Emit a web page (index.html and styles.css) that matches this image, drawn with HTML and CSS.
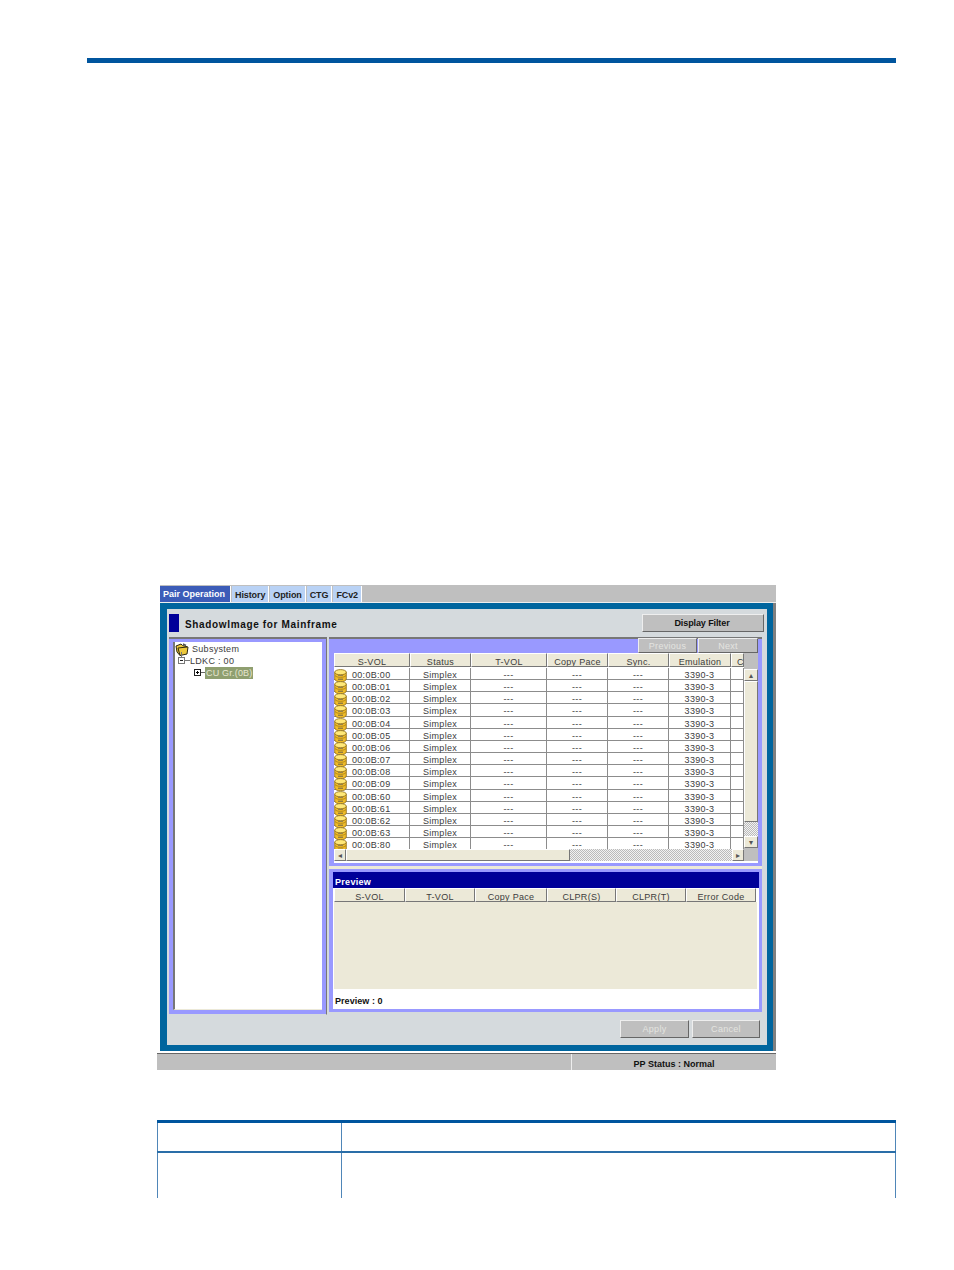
FILE: index.html
```html
<!DOCTYPE html>
<html lang="en">
<head>
  <meta charset="UTF-8" />
  <title>ShadowImage for Mainframe</title>
  <link rel="stylesheet" href="styles.css">
</head>
<body>
  <svg class="defs" width="0" height="0">
    <symbol id="disk" viewBox="0 0 13 13">
      <path d="M.7 3.200v6.800c0 1.600 2.600 2.800 5.800 2.800s5.800-1.200 5.800-2.800V3.200z" fill="#f0bc28" stroke="#8a6a18" stroke-width=".8"/>
      <ellipse cx="6.500" cy="3.200" rx="5.800" ry="2.600" fill="#ffe878" stroke="#8a6a18" stroke-width=".8"/>
      <path d="M1 6.600c1.500 1.500 3.500 1.700 5.500 1.700s4-.2 5.500-1.700" fill="none" stroke="#a07a18" stroke-width=".8"/>
      <path d="M4 10.200h5" stroke="#5a564e" stroke-width=".9"/>
      <path d="M4 6.400h5" stroke="#6a665e" stroke-width=".7"/>
    </symbol>
  </svg>

  <div class="top-rule"></div>

  <div class="shot">
    <div class="shot-main">
      <div class="tabs">
        <div class="tab active">Pair Operation</div>
        <div class="tab">History</div>
        <div class="tab">Option</div>
        <div class="tab">CTG</div>
        <div class="tab">FCv2</div>
      </div>

      <div class="frame">
        <div class="title-row">
          <div class="title-mark"></div>
          <div class="title">ShadowImage for Mainframe</div>
          <div class="btn filter-btn">Display Filter</div>
        </div>

        <div class="panes">
          <div class="tree-pane">
            <div class="tree">
              <div class="tree-row">
                <svg class="tree-folder" width="14" height="13" viewBox="0 0 14 13">
                  <path d="M1 3l5-2 1.500 1.500L13 4l-1 7-7 1.500L2 9z" fill="#ecc83c" stroke="#2e2810"/>
                  <path d="M5 12.500L3 5l9-1" fill="none" stroke="#2e2810"/>
                  <path d="M8 1l3 1.500" stroke="#555" stroke-width="1.500"/>
                </svg>
                <span>Subsystem</span>
              </div>
              <div class="tree-row lvl-1">
                <svg class="twisty" width="12" height="12" viewBox="0 0 12 12">
                  <path d="M3.500 -3V2M7 5.500h5" stroke="#777" fill="none"/>
                  <rect x=".5" y="2.500" width="6" height="6" fill="#fff" stroke="#777"/>
                  <path d="M2 5.500h3" stroke="#222"/>
                </svg>
                <span>LDKC : 00</span>
              </div>
              <div class="tree-row lvl-2">
                <svg class="twisty" width="11" height="12" viewBox="0 0 11 12">
                  <path d="M7 5.500h4" stroke="#666" fill="none"/>
                  <rect x=".5" y="2.500" width="6" height="6" fill="#fff" stroke="#222"/>
                  <path d="M2 5.500h3M3.500 4v3" stroke="#000"/>
                </svg>
                <span class="tree-selected">CU Gr.(0B)</span>
              </div>
            </div>
          </div>

          <div class="right-col">
            <div class="list-pane">
              <div class="pager">
                <div class="btn disabled pager-btn">Previous</div>
                <div class="btn disabled pager-btn next">Next</div>
              </div>
              <div class="list-view">
                <div class="list-main">
                  <div class="list-head">
                    <div class="head-cell">S-VOL</div>
                    <div class="head-cell">Status</div>
                    <div class="head-cell">T-VOL</div>
                    <div class="head-cell">Copy Pace</div>
                    <div class="head-cell">Sync.</div>
                    <div class="head-cell">Emulation</div>
                    <div class="head-cell clipped">C</div>
                  </div>
                  <div class="list-body">
                    <div class="list-row"><div class="cell vol"><svg class="disk"><use href="#disk"/></svg>00:0B:00</div><div class="cell">Simplex</div><div class="cell">---</div><div class="cell">---</div><div class="cell">---</div><div class="cell">3390-3</div><div class="cell"></div></div>
                    <div class="list-row"><div class="cell vol"><svg class="disk"><use href="#disk"/></svg>00:0B:01</div><div class="cell">Simplex</div><div class="cell">---</div><div class="cell">---</div><div class="cell">---</div><div class="cell">3390-3</div><div class="cell"></div></div>
                    <div class="list-row"><div class="cell vol"><svg class="disk"><use href="#disk"/></svg>00:0B:02</div><div class="cell">Simplex</div><div class="cell">---</div><div class="cell">---</div><div class="cell">---</div><div class="cell">3390-3</div><div class="cell"></div></div>
                    <div class="list-row"><div class="cell vol"><svg class="disk"><use href="#disk"/></svg>00:0B:03</div><div class="cell">Simplex</div><div class="cell">---</div><div class="cell">---</div><div class="cell">---</div><div class="cell">3390-3</div><div class="cell"></div></div>
                    <div class="list-row"><div class="cell vol"><svg class="disk"><use href="#disk"/></svg>00:0B:04</div><div class="cell">Simplex</div><div class="cell">---</div><div class="cell">---</div><div class="cell">---</div><div class="cell">3390-3</div><div class="cell"></div></div>
                    <div class="list-row"><div class="cell vol"><svg class="disk"><use href="#disk"/></svg>00:0B:05</div><div class="cell">Simplex</div><div class="cell">---</div><div class="cell">---</div><div class="cell">---</div><div class="cell">3390-3</div><div class="cell"></div></div>
                    <div class="list-row"><div class="cell vol"><svg class="disk"><use href="#disk"/></svg>00:0B:06</div><div class="cell">Simplex</div><div class="cell">---</div><div class="cell">---</div><div class="cell">---</div><div class="cell">3390-3</div><div class="cell"></div></div>
                    <div class="list-row"><div class="cell vol"><svg class="disk"><use href="#disk"/></svg>00:0B:07</div><div class="cell">Simplex</div><div class="cell">---</div><div class="cell">---</div><div class="cell">---</div><div class="cell">3390-3</div><div class="cell"></div></div>
                    <div class="list-row"><div class="cell vol"><svg class="disk"><use href="#disk"/></svg>00:0B:08</div><div class="cell">Simplex</div><div class="cell">---</div><div class="cell">---</div><div class="cell">---</div><div class="cell">3390-3</div><div class="cell"></div></div>
                    <div class="list-row"><div class="cell vol"><svg class="disk"><use href="#disk"/></svg>00:0B:09</div><div class="cell">Simplex</div><div class="cell">---</div><div class="cell">---</div><div class="cell">---</div><div class="cell">3390-3</div><div class="cell"></div></div>
                    <div class="list-row"><div class="cell vol"><svg class="disk"><use href="#disk"/></svg>00:0B:60</div><div class="cell">Simplex</div><div class="cell">---</div><div class="cell">---</div><div class="cell">---</div><div class="cell">3390-3</div><div class="cell"></div></div>
                    <div class="list-row"><div class="cell vol"><svg class="disk"><use href="#disk"/></svg>00:0B:61</div><div class="cell">Simplex</div><div class="cell">---</div><div class="cell">---</div><div class="cell">---</div><div class="cell">3390-3</div><div class="cell"></div></div>
                    <div class="list-row"><div class="cell vol"><svg class="disk"><use href="#disk"/></svg>00:0B:62</div><div class="cell">Simplex</div><div class="cell">---</div><div class="cell">---</div><div class="cell">---</div><div class="cell">3390-3</div><div class="cell"></div></div>
                    <div class="list-row"><div class="cell vol"><svg class="disk"><use href="#disk"/></svg>00:0B:63</div><div class="cell">Simplex</div><div class="cell">---</div><div class="cell">---</div><div class="cell">---</div><div class="cell">3390-3</div><div class="cell"></div></div>
                    <div class="list-row"><div class="cell vol"><svg class="disk"><use href="#disk"/></svg>00:0B:80</div><div class="cell">Simplex</div><div class="cell">---</div><div class="cell">---</div><div class="cell">---</div><div class="cell">3390-3</div><div class="cell"></div></div>
                  </div>
                  <div class="hscroll">
                    <div class="sb-btn h">&#9666;</div>
                    <div class="sb-thumb h"></div>
                    <div class="sb-track"></div>
                    <div class="sb-btn h">&#9656;</div>
                  </div>
                </div>
                <div class="vscroll">
                  <div class="sb-corner"></div>
                  <div class="sb-btn v">&#9652;</div>
                  <div class="sb-thumb v"></div>
                  <div class="sb-track"></div>
                  <div class="sb-btn v">&#9662;</div>
                  <div class="sb-corner end"></div>
                </div>
              </div>
            </div>

            <div class="split"></div>

            <div class="preview">
              <div class="preview-bar">Preview</div>
              <div class="preview-head">
                <div class="head-cell">S-VOL</div>
                <div class="head-cell">T-VOL</div>
                <div class="head-cell">Copy Pace</div>
                <div class="head-cell">CLPR(S)</div>
                <div class="head-cell">CLPR(T)</div>
                <div class="head-cell">Error Code</div>
              </div>
              <div class="preview-body"></div>
              <div class="preview-foot">Preview : 0</div>
            </div>
          </div>
        </div>

        <div class="actions">
          <div class="btn disabled apply-btn">Apply</div>
          <div class="btn disabled cancel-btn">Cancel</div>
        </div>
      </div>
    </div>

    <div class="status-bar">
      <div class="status-left"></div>
      <div class="status-right">PP Status : Normal</div>
    </div>
  </div>

  <table class="doc-table">
    <tr class="doc-head"><td class="col-a"></td><td></td></tr>
    <tr class="doc-row"><td class="col-a"></td><td></td></tr>
  </table>
</body>
</html>
```

FILE: styles.css
```css
body {
  margin: 0;
  min-height: 1270px;
  background-color: #fff;
  font-family: "Liberation Sans", Arial, sans-serif;
  color: #3c3c3c;
}
.defs {
  display: block;
  height: 0;
}
.top-rule {
  height: 5px;
  margin: 58px 58px 0 87px;
  background-color: #00559e;
}

/* the screenshot */
.shot {
  width: 619px;
  margin: 522px 0 0 157px;
  font-size: 9px;
  letter-spacing: .3px;
}
.shot-main {
  margin-left: 3px;
  padding-right: 3px;
  background-color: #808080;
}
.tabs {
  display: flex;
  gap: 1px;
  box-sizing: border-box;
  height: 18px;
  margin-right: -3px;
  padding-top: 1px;
  background-color: #bfbfbf;
  border-bottom: 1px solid #eee;
}
.tab {
  padding: 4px 3px 0;
  background-color: #b9d2f5;
  color: #222;
  font-weight: bold;
  letter-spacing: -.1px;
  border-right: 1px solid #fff;
}
.tab.active {
  width: 71px;
  box-sizing: border-box;
  padding-top: 3px;
  background-color: #3c5cb8;
  color: #fff;
  letter-spacing: 0;
  white-space: nowrap;
}
.frame {
  box-sizing: border-box;
  width: 613px;
  height: 448px;
  background-color: #d5dadd;
  border: solid #00659e;
  border-width: 6px 6px 6px 7px;
  display: flex;
  flex-direction: column;
}
.title-row {
  display: flex;
  align-items: flex-start;
  height: 28px;
  padding: 5px 3px 0 2px;
  box-sizing: border-box;
}
.title-mark {
  width: 10px;
  height: 18px;
  background-color: #000099;
}
.title {
  flex: 1;
  margin-left: 6px;
  padding-top: 5px;
  font-size: 10px;
  font-weight: bold;
  letter-spacing: .65px;
  color: #111;
}
.btn {
  box-sizing: border-box;
  display: flex;
  align-items: center;
  justify-content: center;
  background-color: #bfbfbf;
  border: 1px solid;
  border-color: #eee #666 #666 #eee;
  color: #111;
  font-weight: bold;
  letter-spacing: 0;
}
.btn.disabled {
  color: #e4e4e0;
  font-weight: normal;
  letter-spacing: .3px;
}
.filter-btn {
  width: 122px;
  height: 18px;
  padding-right: 2px;
  letter-spacing: -.1px;
}

.panes {
  display: flex;
  height: 378px;
  margin-left: 2px;
}
.tree-pane {
  box-sizing: border-box;
  width: 158px;
  padding: 3px 4px 4px 4px;
  background-color: #9999ff;
  border-top: 2px solid #777;
  border-right: 1px solid #777;
  border-bottom: 1px solid #d5dadd;
}
.tree {
  box-sizing: border-box;
  height: 100%;
  padding-top: 1px;
  background-color: #fff;
  border-left: 2px solid #777;
  border-bottom: 1px solid #ece9d8;
}
.tree-row {
  display: flex;
  align-items: center;
  height: 12px;
  white-space: nowrap;
}
.tree-folder {
  margin-right: 3px;
  flex: none;
  overflow: visible;
}
.twisty {
  flex: none;
  overflow: visible;
}
.lvl-1 {
  padding-left: 3px;
}
.lvl-2 {
  padding-left: 19px;
}
.tree-selected {
  padding: 1px 0 1px 1px;
  background-color: #8f9f70;
  color: #e6e6d0;
  letter-spacing: .2px;
}

.right-col {
  box-sizing: border-box;
  width: 433px;
  margin-left: 2px;
  height: 376px;
  display: flex;
  flex-direction: column;
}
.list-pane {
  box-sizing: border-box;
  height: 229px;
  padding: 0 4px 0 5px;
  background-color: #9999ff;
  border-top: 2px solid #777;
}
.pager {
  display: flex;
  justify-content: flex-end;
  gap: 1px;
  height: 14px;
}
.pager-btn {
  width: 59px;
  height: 15px;
  margin-top: -1px;
}
.next {
  width: 60px;
}
.list-view {
  display: flex;
  height: 208px;
  border-bottom: 2px solid #fff;
  background-color: #bfbfbf;
}
.list-main {
  width: 410px;
  display: flex;
  flex-direction: column;
}
.list-head {
  display: grid;
  grid-template-columns: 76px 61px 76px 61px 61px 62px 13px;
  height: 14px;
  background-color: #bfbfbf;
}
.head-cell {
  box-sizing: border-box;
  display: flex;
  align-items: center;
  justify-content: center;
  padding-top: 3px;
  background-color: #ece9d8;
  border: 1px solid;
  border-color: #fff #777 #777 #fff;
  overflow: hidden;
}
.clipped {
  justify-content: flex-start;
  padding-left: 5px;
}
.list-body {
  flex: 1;
  overflow: hidden;
  background-color: #fff;
  padding-top: .8px;
  min-height: 0;
}
.list-row {
  box-sizing: border-box;
  display: grid;
  grid-template-columns: 76px 61px 76px 61px 61px 62px 13px;
  height: 12.2px;
  border-bottom: 1px solid #8c8c8c;
}
.cell {
  box-sizing: border-box;
  display: flex;
  align-items: center;
  justify-content: center;
  padding-top: 1px;
  line-height: 11px;
  border-right: 1px solid #8c8c8c;
}
.cell.vol {
  justify-content: flex-start;
}
.disk {
  width: 13px;
  height: 13px;
  margin-right: 5px;
  flex: none;
}
.hscroll {
  display: flex;
  height: 12px;
  background-color: #ece9d8;
}
.sb-btn {
  box-sizing: border-box;
  display: flex;
  align-items: center;
  justify-content: center;
  background-color: #ece9d8;
  border: 1px solid;
  border-color: #fff #777 #777 #fff;
  color: #555;
  font-size: 8px;
  letter-spacing: 0;
}
.sb-btn.h {
  width: 12px;
  flex: none;
}
.sb-btn.v {
  height: 12px;
  flex: none;
}
.sb-thumb {
  box-sizing: border-box;
  background-color: #ece9d8;
  border: 1px solid;
  border-color: #fff #777 #777 #fff;
}
.sb-thumb.h {
  width: 224px;
}
.sb-thumb.v {
  height: 141px;
}
.sb-track {
  flex: 1;
  background: repeating-conic-gradient(#bbb 0 25%, #f2f2f2 0 50%) 0 0/2px 2px;
}
.vscroll {
  box-sizing: border-box;
  width: 14px;
  display: flex;
  flex-direction: column;
  background-color: #bfbfbf;
}
.sb-corner {
  height: 16px;
  flex: none;
  background-color: #bfbfbf;
}
.sb-corner.end {
  height: 13px;
}

.split {
  height: 3px;
  background-color: #ece9d8;
}
.preview {
  box-sizing: border-box;
  height: 143px;
  background-color: #fff;
  border: solid #9999ff;
  border-width: 3px 3px 3px 4px;
}
.preview-bar {
  height: 16px;
  line-height: 20px;
  padding-left: 2px;
  background-color: #000099;
  color: #fff;
  font-weight: bold;
  overflow: hidden;
}
.preview-head {
  display: grid;
  grid-template-columns: 71px 70px 72px 69px 70px 70px;
  height: 14px;
  padding-left: 1px;
}
.preview-body {
  height: 87px;
  margin: 0 2px 0 1px;
  background-color: #ece9d8;
}
.preview-foot {
  height: 20px;
  line-height: 24px;
  padding-left: 2px;
  color: #111;
  font-weight: bold;
  letter-spacing: .05px;
  overflow: hidden;
}

.actions {
  display: flex;
  justify-content: flex-end;
  gap: 3px;
  padding: 5px 7px 0 0;
}
.apply-btn {
  width: 69px;
  height: 18px;
}
.cancel-btn {
  width: 68px;
  height: 18px;
}

.status-bar {
  display: flex;
  box-sizing: border-box;
  height: 17px;
  background-color: #bfbfbf;
  border-top: 1px solid #666;
  margin-top: 2px;
  color: #111;
  font-weight: bold;
  letter-spacing: 0;
}
.status-left {
  width: 414px;
  border-right: 1px solid #eee;
}
.status-right {
  flex: 1;
  padding-top: 5px;
  text-align: center;
}

/* table below the screenshot */
.doc-table {
  width: 739px;
  margin: 50px 0 0 157px;
  border-collapse: collapse;
  table-layout: fixed;
  border-top: 3px solid #00559e;
}
.doc-table td {
  padding: 0;
  border-left: 1px solid #4f86b8;
  border-right: 1px solid #4f86b8;
}
.col-a {
  width: 183px;
}
.doc-head td {
  height: 28px;
  border-bottom: 2px solid #2a6ea8;
}
.doc-row td {
  height: 45px;
}
```
